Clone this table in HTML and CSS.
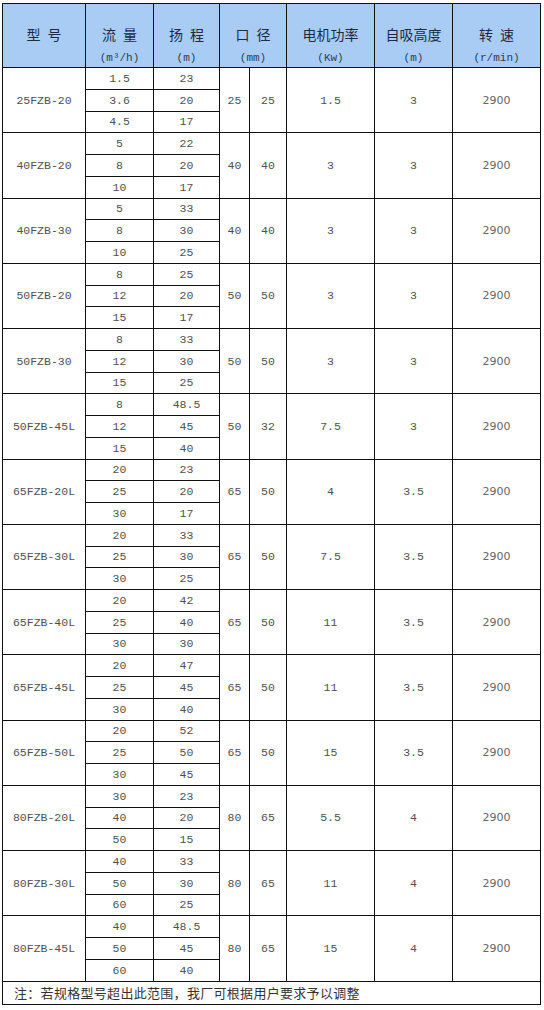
FILE: index.html
```html
<!DOCTYPE html>
<html lang="zh">
<head>
<meta charset="utf-8">
<link rel="stylesheet" href="styles.css">
</head>
<body>
<div class="wrap">
<table class="spec">
<colgroup>
<col class="c-model"><col class="c-flow"><col class="c-head"><col class="c-d1"><col class="c-d2"><col class="c-pow"><col class="c-suc"><col class="c-spd">
</colgroup>
<thead>
<tr class="hdr">
<th><div class="t">型 号</div></th>
<th><div class="t">流 量</div><div class="u">(m³/h)</div></th>
<th><div class="t">扬 程</div><div class="u">(m)</div></th>
<th colspan="2"><div class="t">口 径</div><div class="u">(mm)</div></th>
<th><div class="t">电机功率</div><div class="u">(Kw)</div></th>
<th><div class="t">自吸高度</div><div class="u">(m)</div></th>
<th><div class="t">转 速</div><div class="u">(r/min)</div></th>
</tr>
</thead>
<tbody>
<tr><td rowspan="3">25FZB-20</td><td>1.5</td><td>23</td><td rowspan="3">25</td><td rowspan="3">25</td><td rowspan="3">1.5</td><td rowspan="3">3</td><td rowspan="3" class="spd">2900</td></tr>
<tr><td>3.6</td><td>20</td></tr>
<tr><td>4.5</td><td>17</td></tr>

<tr><td rowspan="3">40FZB-20</td><td>5</td><td>22</td><td rowspan="3">40</td><td rowspan="3">40</td><td rowspan="3">3</td><td rowspan="3">3</td><td rowspan="3" class="spd">2900</td></tr>
<tr><td>8</td><td>20</td></tr>
<tr><td>10</td><td>17</td></tr>

<tr><td rowspan="3">40FZB-30</td><td>5</td><td>33</td><td rowspan="3">40</td><td rowspan="3">40</td><td rowspan="3">3</td><td rowspan="3">3</td><td rowspan="3" class="spd">2900</td></tr>
<tr><td>8</td><td>30</td></tr>
<tr><td>10</td><td>25</td></tr>

<tr><td rowspan="3">50FZB-20</td><td>8</td><td>25</td><td rowspan="3">50</td><td rowspan="3">50</td><td rowspan="3">3</td><td rowspan="3">3</td><td rowspan="3" class="spd">2900</td></tr>
<tr><td>12</td><td>20</td></tr>
<tr><td>15</td><td>17</td></tr>

<tr><td rowspan="3">50FZB-30</td><td>8</td><td>33</td><td rowspan="3">50</td><td rowspan="3">50</td><td rowspan="3">3</td><td rowspan="3">3</td><td rowspan="3" class="spd">2900</td></tr>
<tr><td>12</td><td>30</td></tr>
<tr><td>15</td><td>25</td></tr>

<tr><td rowspan="3">50FZB-45L</td><td>8</td><td>48.5</td><td rowspan="3">50</td><td rowspan="3">32</td><td rowspan="3">7.5</td><td rowspan="3">3</td><td rowspan="3" class="spd">2900</td></tr>
<tr><td>12</td><td>45</td></tr>
<tr><td>15</td><td>40</td></tr>

<tr><td rowspan="3">65FZB-20L</td><td>20</td><td>23</td><td rowspan="3">65</td><td rowspan="3">50</td><td rowspan="3">4</td><td rowspan="3">3.5</td><td rowspan="3" class="spd">2900</td></tr>
<tr><td>25</td><td>20</td></tr>
<tr><td>30</td><td>17</td></tr>

<tr><td rowspan="3">65FZB-30L</td><td>20</td><td>33</td><td rowspan="3">65</td><td rowspan="3">50</td><td rowspan="3">7.5</td><td rowspan="3">3.5</td><td rowspan="3" class="spd">2900</td></tr>
<tr><td>25</td><td>30</td></tr>
<tr><td>30</td><td>25</td></tr>

<tr><td rowspan="3">65FZB-40L</td><td>20</td><td>42</td><td rowspan="3">65</td><td rowspan="3">50</td><td rowspan="3">11</td><td rowspan="3">3.5</td><td rowspan="3" class="spd">2900</td></tr>
<tr><td>25</td><td>40</td></tr>
<tr><td>30</td><td>30</td></tr>

<tr><td rowspan="3">65FZB-45L</td><td>20</td><td>47</td><td rowspan="3">65</td><td rowspan="3">50</td><td rowspan="3">11</td><td rowspan="3">3.5</td><td rowspan="3" class="spd">2900</td></tr>
<tr><td>25</td><td>45</td></tr>
<tr><td>30</td><td>40</td></tr>

<tr><td rowspan="3">65FZB-50L</td><td>20</td><td>52</td><td rowspan="3">65</td><td rowspan="3">50</td><td rowspan="3">15</td><td rowspan="3">3.5</td><td rowspan="3" class="spd">2900</td></tr>
<tr><td>25</td><td>50</td></tr>
<tr><td>30</td><td>45</td></tr>

<tr><td rowspan="3">80FZB-20L</td><td>30</td><td>23</td><td rowspan="3">80</td><td rowspan="3">65</td><td rowspan="3">5.5</td><td rowspan="3">4</td><td rowspan="3" class="spd">2900</td></tr>
<tr><td>40</td><td>20</td></tr>
<tr><td>50</td><td>15</td></tr>

<tr><td rowspan="3">80FZB-30L</td><td>40</td><td>33</td><td rowspan="3">80</td><td rowspan="3">65</td><td rowspan="3">11</td><td rowspan="3">4</td><td rowspan="3" class="spd">2900</td></tr>
<tr><td>50</td><td>30</td></tr>
<tr><td>60</td><td>25</td></tr>

<tr><td rowspan="3">80FZB-45L</td><td>40</td><td>48.5</td><td rowspan="3">80</td><td rowspan="3">65</td><td rowspan="3">15</td><td rowspan="3">4</td><td rowspan="3" class="spd">2900</td></tr>
<tr><td>50</td><td>45</td></tr>
<tr><td>60</td><td>40</td></tr>

<tr class="note"><td colspan="8">注：若规格型号超出此范围，我厂可根据用户要求予以调整</td></tr>
</tbody>
</table>
</div>
</body>
</html>
```

FILE: styles.css
```css
html, body {
  margin: 0;
  padding: 0;
  background: #ffffff;
}

.wrap {
  padding: 3px 0 0 2px;
}

.spec {
  border-collapse: collapse;
  table-layout: fixed;
  width: 539px;
  font-family: "Liberation Mono", "Noto Sans CJK SC", monospace;
  font-size: 11.5px;
  color: #505050;
}

.c-model { width: 83px; }
.c-flow { width: 68px; }
.c-head { width: 66px; }
.c-d1 { width: 30px; }
.c-d2 { width: 37px; }
.c-pow { width: 88px; }
.c-suc { width: 78px; }
.c-spd { width: 88px; }

.spec th,
.spec td {
  border: 1px solid #111111;
  padding: 0;
  text-align: center;
  vertical-align: middle;
}

.hdr th {
  height: 64px;
  background: #a8ccf4;
  vertical-align: top;
  font-weight: normal;
  color: #1c2a44;
  padding-top: 20px;
  box-sizing: border-box;
}

.hdr .t {
  font-family: "Noto Sans CJK SC", sans-serif;
  font-size: 14px;
  line-height: 20px;
  white-space: nowrap;
  word-spacing: 4px;
}

.hdr .u {
  font-family: "Liberation Mono", monospace;
  font-size: 11px;
  line-height: 14px;
  margin-top: 7px;
  color: #2e3c54;
  white-space: nowrap;
}

.spec tbody tr {
  height: 21.76px;
}

.spec td.spd {
  font-family: "DejaVu Sans", sans-serif;
  font-size: 11px;
  color: #666666;
}

.spec tr.note td {
  height: 22px;
  text-align: left;
  padding-left: 11px;
  font-family: "Noto Sans CJK SC", sans-serif;
  font-size: 13px;
  letter-spacing: 0.3px;
  color: #333333;
}
```
